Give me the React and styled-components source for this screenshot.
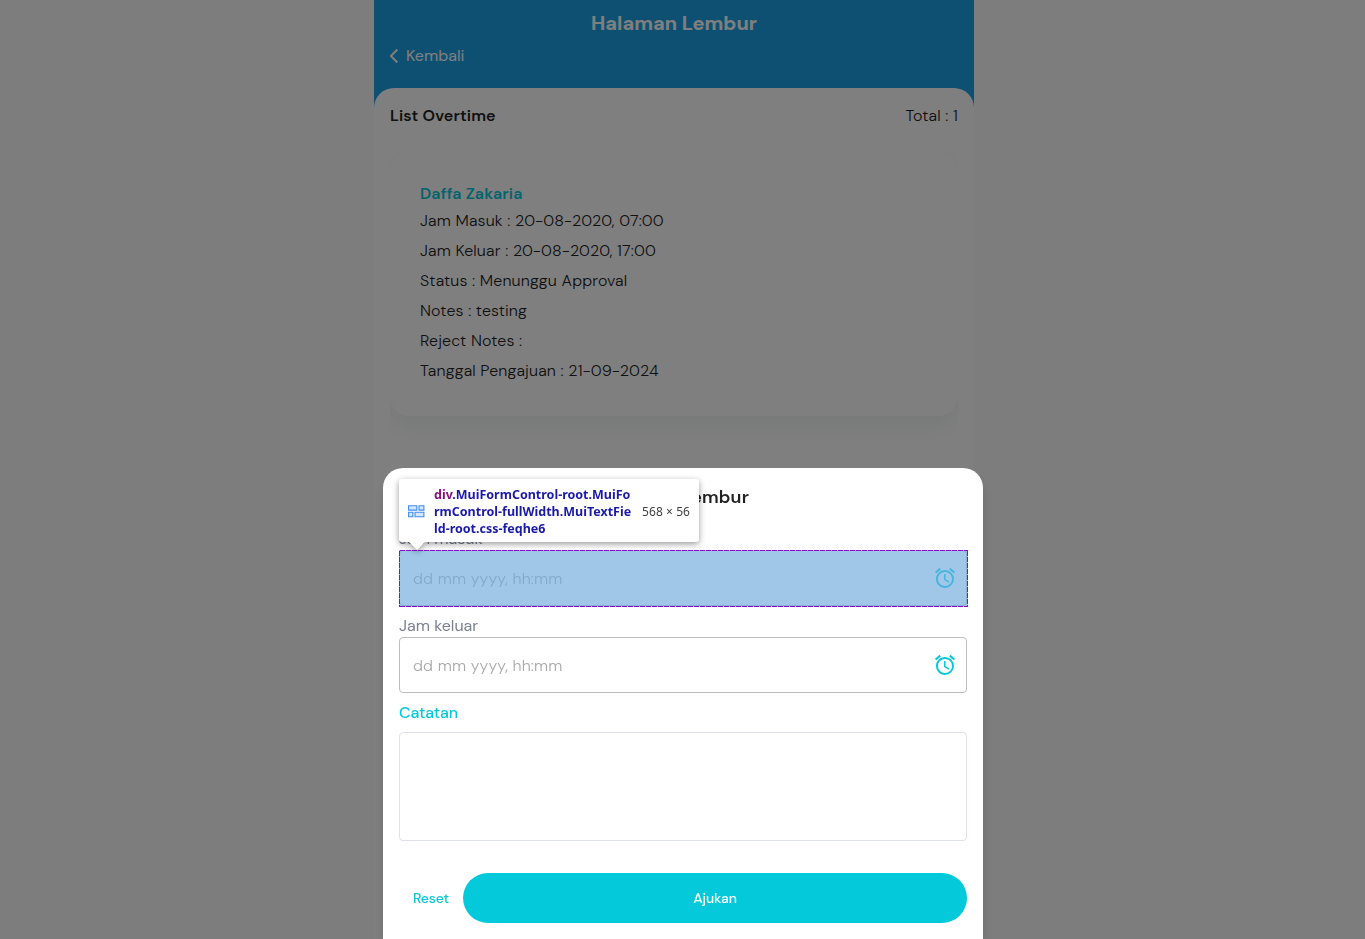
import React from 'react';
import styled, { createGlobalStyle, css } from 'styled-components';
import { MdAccessAlarm } from 'react-icons/md';

const GlobalStyle = createGlobalStyle`
  * { box-sizing: border-box; }
  body {
    margin: 0;
    overflow: hidden;
    background: #fafafa;
    color: #212121;
    font-family: "DM Sans", Inter, sans-serif;
    font-size: 16px;
  }
  h1, h2, h3, p { margin: 0; }
`;

const tracked = css`letter-spacing: ${({ $track = 0 }) => $track}px; white-space: nowrap;`;

const Page = styled.main`
  width: 600px;
  height: 939px;
  margin-left: 374px;
  background: #1ca1e4;
`;

const Header = styled.header`
  height: 88px;
  padding: 8px 16px 0;
  color: #fff;
`;

const PageTitle = styled.h1`
  ${tracked}
  text-align: center;
  font-size: 20px;
  font-weight: 700;
  line-height: 30px;
`;

const BackLink = styled.div`
  ${tracked}
  display: flex;
  align-items: center;
  gap: 8px;
  height: 24px;
  margin-top: 6px;
  line-height: 24px;
`;

const Sheet = styled.section`
  height: 851px;
  padding: 16px;
  border-radius: 20px 20px 0 0;
  background: #fff;
`;

const SummaryRow = styled.div`
  display: flex;
  justify-content: space-between;
  line-height: 24px;
`;

const SummaryTitle = styled.h2`
  letter-spacing: 0.15px;
  font-size: 16px;
  font-weight: 600;
`;

const Line = styled.p`
  letter-spacing: 0.15px;
  white-space: nowrap;
  font-weight: 300;
  line-height: ${({ $height = 30 }) => $height}px;
`;

const CardClip = styled.div`
  height: 300px;
  margin-top: 24px;
  overflow: hidden;
`;

const Card = styled.article`
  height: 264px;
  padding: 29px 30px;
  border-radius: 20px;
  background: #fff;
  box-shadow: 0 10px 24px rgba(0, 50, 36, 0.07);
`;

const CardName = styled.h3`
  letter-spacing: 0.15px;
  font-size: 16px;
  font-weight: 600;
  line-height: 25px;
  color: #04c9da;
`;

const Backdrop = styled.div`
  position: fixed;
  inset: 0;
  display: flex;
  align-items: flex-end;
  padding-left: 383px;
  background: rgba(0, 0, 0, 0.5);
`;

const Dialog = styled.div`
  width: 600px;
  height: 471px;
  padding: 16px;
  border-radius: 20px 20px 0 0;
  background: #fff;
  box-shadow: 0 8px 12px rgba(0, 0, 0, 0.12);
`;

const DialogTitle = styled.h2`
  letter-spacing: 0.15px;
  height: 43px;
  font-size: 18px;
  font-weight: 600;
  line-height: 26px;
  text-align: center;
`;

const FieldLabel = styled.div`
  ${tracked}
  height: 23px;
  line-height: 24px;
  color: ${({ $accent }) => ($accent ? '#04c9da' : '#7b8190')};
  font-weight: ${({ $accent }) => ($accent ? 500 : 400)};
`;

const Field = styled.div`
  position: relative;
  display: flex;
  align-items: center;
  justify-content: space-between;
  height: 56px;
  margin-bottom: 8px;
  padding: 0 9px 0 13px;
  border: 1px solid #bdbdbd;
  border-radius: 4px;
  color: #04c9da;
`;

const Placeholder = styled.span`
  letter-spacing: 0.15px;
  color: #a9a9a9;
  font-weight: 300;
`;

const Notes = styled.div`
  height: 109px;
  margin-top: 8px;
  border: 1px solid #dfe1e9;
  border-radius: 4px;
`;

const Actions = styled.div`
  display: grid;
  grid-template-columns: 64px 1fr;
  height: 50px;
  margin-top: 32px;
`;

const Button = styled.button`
  padding: 0;
  border: 0;
  border-radius: 25px;
  font: 500 14px "DM Sans", Inter, sans-serif;
  letter-spacing: -0.15px;
  color: ${({ $filled }) => ($filled ? '#fff' : '#04c9da')};
  background: ${({ $filled }) => ($filled ? '#04c9da' : 'transparent')};
`;

const dashes = 'transparent 0 1px, #8410d8 1px 6px';

const Highlight = styled.div`
  position: absolute;
  inset: -1px -2px -2px -1px;
  background:
    repeating-linear-gradient(90deg, ${dashes}) top / 100% 1px no-repeat,
    repeating-linear-gradient(90deg, ${dashes}) bottom / 100% 1px no-repeat,
    repeating-linear-gradient(${dashes}) left / 1px 100% no-repeat,
    repeating-linear-gradient(${dashes}) right / 1px 100% no-repeat,
    rgba(111, 168, 220, 0.66);
`;

const Tooltip = styled.div`
  position: absolute;
  left: -1px;
  bottom: 63px;
  display: flex;
  align-items: center;
  width: 300px;
  height: 63px;
  padding: 2px 0 0 9px;
  border-radius: 3px;
  background: #fff;
  filter: drop-shadow(0 2px 3px rgba(0, 0, 0, 0.4));
  font-family: "Noto Sans", sans-serif;

  &::after {
    content: "";
    position: absolute;
    top: 100%;
    left: 10px;
    border: solid transparent;
    border-width: 8px 8px 0;
    border-top-color: #fff;
  }
`;

const Selector = styled.div`
  width: 208px;
  margin-left: 9px;
  font-size: 12.5px;
  font-weight: 700;
  line-height: 17px;
  white-space: nowrap;
  color: #1a1aa6;
`;

const TagName = styled.span`color: #881280;`;

const Dimensions = styled.span`
  ${tracked}
  font-size: 12px;
  color: #404040;
`;

function GridIcon() {
  return (
    <svg width="17" height="13" viewBox="0 0 17 13" fill="#d5e6ff" stroke="#3f8cf0" strokeWidth="1.1">
      <path d="M.6.8h8.2v4.3H.6zM11 .8h4.9v4.3H11zM.6 7.3h4.3v4.5H.6zM7 7.3h8.9v4.5H7z" />
    </svg>
  );
}

const details = [
  'Jam Masuk : 20-08-2020, 07:00',
  'Jam Keluar : 20-08-2020, 17:00',
  'Status : Menunggu Approval',
  'Notes : testing',
  'Reject Notes :',
  'Tanggal Pengajuan : 21-09-2024',
];

export default function App() {
  return (
    <>
      <GlobalStyle />
      <Page>
        <Header>
          <PageTitle>Halaman Lembur</PageTitle>
          <BackLink>
            <svg width="8" height="14" viewBox="0 0 8 14" fill="none" stroke="currentColor" strokeWidth="2">
              <path d="M7.3.5.9 7l6.4 6.5" />
            </svg>
            Kembali
          </BackLink>
        </Header>
        <Sheet>
          <SummaryRow>
            <SummaryTitle>List Overtime</SummaryTitle>
            <Line $height={24}>Total : 1</Line>
          </SummaryRow>
          <CardClip>
            <Card>
              <CardName>Daffa Zakaria</CardName>
              {details.map((text) => <Line key={text}>{text}</Line>)}
            </Card>
          </CardClip>
        </Sheet>
      </Page>
      <Backdrop>
        <Dialog>
          <DialogTitle>Ajukan Lembur</DialogTitle>
          <FieldLabel>Jam masuk</FieldLabel>
          <Field>
            <Placeholder>dd mm yyyy, hh:mm</Placeholder>
            <MdAccessAlarm size={24} />
            <Highlight />
            <Tooltip>
              <GridIcon />
              <Selector>
                <TagName>div</TagName>.MuiFormControl-root.MuiFo<br />
                rmControl-fullWidth.MuiTextFie<br />
                ld-root.css-feqhe6
              </Selector>
              <Dimensions $track={0.08}>568 × 56</Dimensions>
            </Tooltip>
          </Field>
          <FieldLabel>Jam keluar</FieldLabel>
          <Field>
            <Placeholder>dd mm yyyy, hh:mm</Placeholder>
            <MdAccessAlarm size={24} />
          </Field>
          <FieldLabel $accent $track={-0.18}>Catatan</FieldLabel>
          <Notes />
          <Actions>
            <Button>Reset</Button>
            <Button $filled>Ajukan</Button>
          </Actions>
        </Dialog>
      </Backdrop>
    </>
  );
}
